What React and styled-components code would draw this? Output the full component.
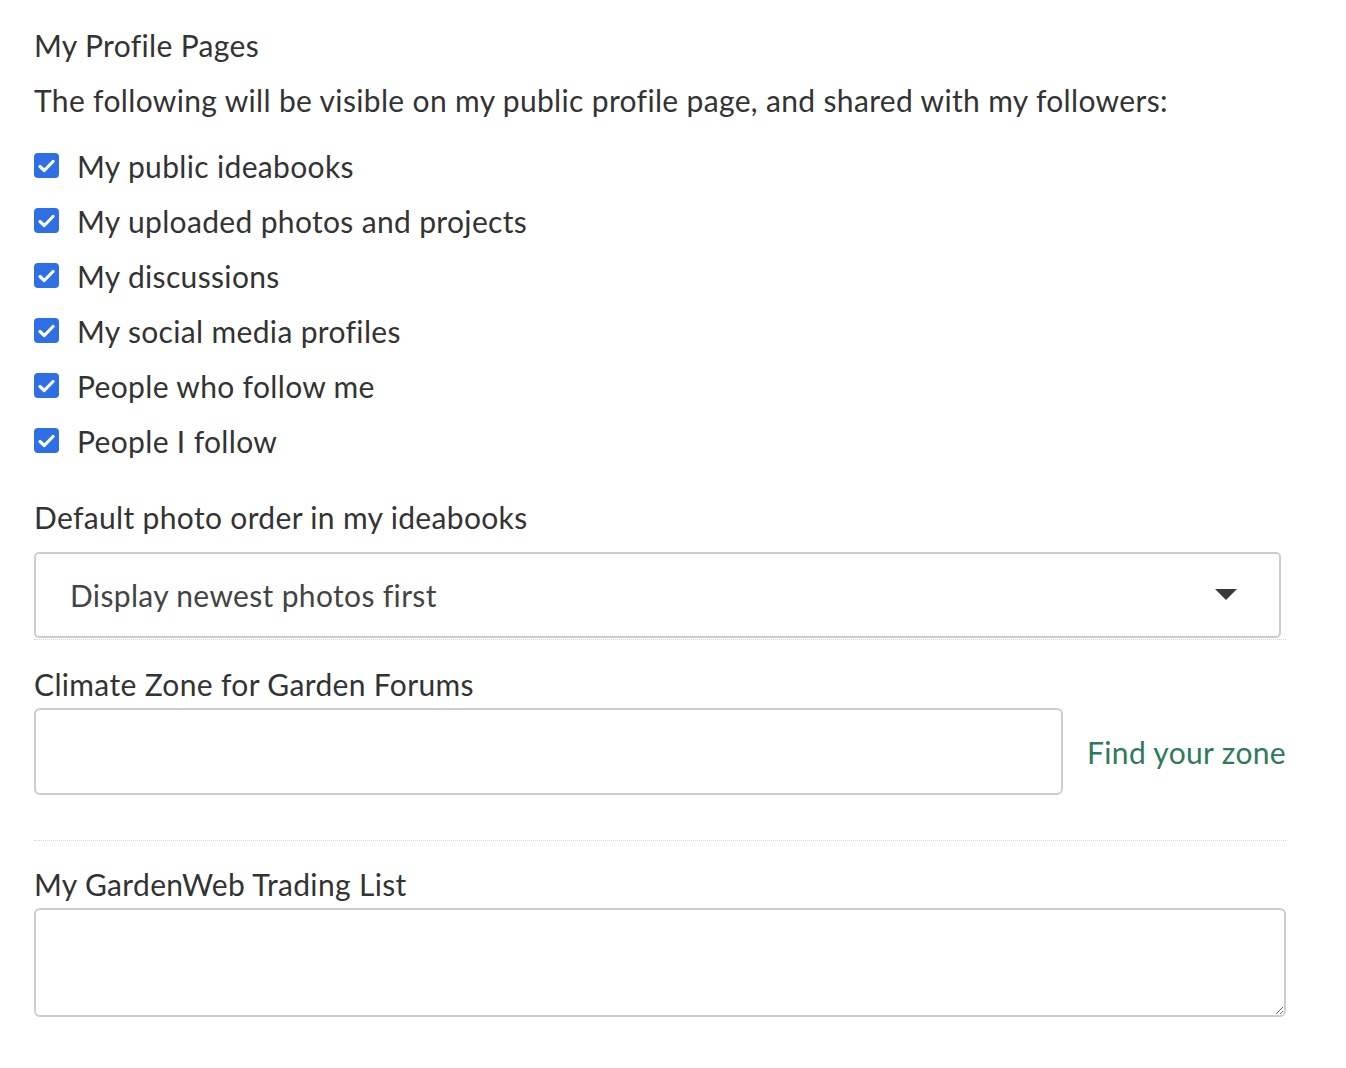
import React from "react";
import styled, { createGlobalStyle } from "styled-components";

const Global = createGlobalStyle`
  html, body { margin: 0; padding: 0; background: #fff; }
  body { font-family: "Lato", "Open Sans", sans-serif; color: #333; letter-spacing: 0.34px; }
  * { box-sizing: border-box; }
`;

const Page = styled.div`
  width: 1286px;
  padding: 25px 0 40px 34px;
`;

const Title = styled.h2`
  margin: 0;
  font-size: 30px;
  font-weight: 400;
  line-height: 40px;
  color: #333;
`;

const Desc = styled.p`
  margin: 15px 0 0;
  font-size: 30px;
  line-height: 40px;
`;

const List = styled.ul`
  list-style: none;
  margin: 18px 0 0;
  padding: 0;
`;

const Row = styled.li`
  display: flex;
  align-items: center;
  gap: 18px;
  height: 55px;
  font-size: 30px;
`;

const Box = styled.span`
  width: 25px;
  height: 25px;
  border-radius: 4px;
  background: #2f6fe6;
  display: inline-flex;
  align-items: center;
  justify-content: center;
  flex: none;
`;

const Label = styled.label`
  display: block;
  font-size: 30px;
  line-height: 34px;
  margin-top: ${(p) => p.$top}px;
`;

const SelectWrap = styled.div`
  margin-top: 18px;
  padding-bottom: 1px;
  border-bottom: 1px dotted #d6d6d6;
`;

const SelectBox = styled.div`
  position: relative;
  width: calc(100% - 5px);
`;

const Select = styled.select`
  appearance: none;
  -webkit-appearance: none;
  width: 100%;
  height: 86px;
  border: 2px solid #cdcdcd;
  border-radius: 5px;
  background: #fff;
  padding: 0 0 0 34px;
  font-family: inherit;
  letter-spacing: 0.34px;
  font-size: 30px;
  color: #444;
  outline: none;
`;

const Arrow = styled.svg`
  position: absolute;
  right: 44px;
  top: 37px;
  pointer-events: none;
`;

const ZoneRow = styled.div`
  margin-top: 7px;
  display: flex;
  align-items: center;
  gap: 24px;
  padding-bottom: 45px;
  border-bottom: 1px dotted #d6d6d6;
`;

const Input = styled.input`
  flex: 1;
  height: 87px;
  border: 2px solid #cdcdcd;
  border-radius: 6px;
  font-family: inherit;
  font-size: 30px;
  padding: 0 20px;
  outline: none;
`;

const Link = styled.a`
  font-size: 30px;
  color: #2f7a5b;
  text-decoration: none;
  white-space: nowrap;
`;

const Textarea = styled.textarea`
  display: block;
  margin-top: 7px;
  width: 100%;
  height: 109px;
  border: 2px solid #cdcdcd;
  border-radius: 6px;
  font-family: inherit;
  font-size: 30px;
  padding: 12px 20px;
  outline: none;
`;

const items = [
  "My public ideabooks",
  "My uploaded photos and projects",
  "My discussions",
  "My social media profiles",
  "People who follow me",
  "People I follow",
];

const Check = () => (
  <Box>
    <svg width="17" height="14" viewBox="0 0 17 14">
      <path d="M2 7.5 L6.3 11.5 L15 2.5" fill="none" stroke="#fff" strokeWidth="3.2" strokeLinecap="round" strokeLinejoin="round" />
    </svg>
  </Box>
);

export default function App() {
  return (
    <>
      <Global />
      <Page>
        <Title>My Profile Pages</Title>
        <Desc>The following will be visible on my public profile page, and shared with my followers:</Desc>
        <List>
          {items.map((t) => (
            <Row key={t}>
              <Check />
              <span>{t}</span>
            </Row>
          ))}
        </List>
        <Label $top={32}>Default photo order in my ideabooks</Label>
        <SelectWrap>
          <SelectBox>
            <Select defaultValue="newest">
              <option value="newest">Display newest photos first</option>
              <option value="oldest">Display oldest photos first</option>
            </Select>
            <Arrow width="22" height="12" viewBox="0 0 22 12">
              <path d="M0 0 H22 L11 11 Z" fill="#3a3a3a" />
            </Arrow>
          </SelectBox>
        </SelectWrap>
        <Label $top={27}>Climate Zone for Garden Forums</Label>
        <ZoneRow>
          <Input type="text" />
          <Link href="#">Find your zone</Link>
        </ZoneRow>
        <Label $top={26}>My GardenWeb Trading List</Label>
        <Textarea />
      </Page>
    </>
  );
}
